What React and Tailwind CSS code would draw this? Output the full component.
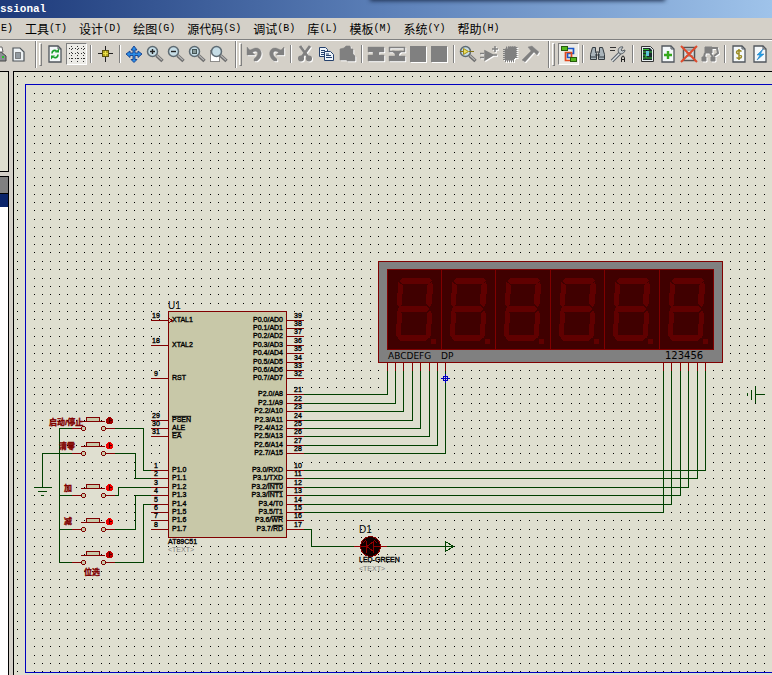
const MENUS = [
  ['', 'E'],
  ['工具', 'T'],
  ['设计', 'D'],
  ['绘图', 'G'],
  ['源代码', 'S'],
  ['调试', 'B'],
  ['库', 'L'],
  ['模板', 'M'],
  ['系统', 'Y'],
  ['帮助', 'H'],
];

function Page({ x = 4, children }) {
  return (
    <>
      <path d={`M${x} 2h9l3 3v13h-12z`} fill="#f4f8fa" stroke="#50565c" strokeWidth="1.3" />
      <path d={`M${x + 9} 2v3h3`} fill="none" stroke="#50565c" />
      {children}
    </>
  );
}

// greyed-out icons carry a white copy shifted down-right
function Etched({ children }) {
  return (
    <>
      <g transform="translate(1 1)" fill="#fff" stroke="#fff">{children}</g>
      <g fill="#808080" stroke="#808080">{children}</g>
    </>
  );
}

function Lens({ children }) {
  return (
    <>
      <path d="M11.5 11.5l6 5.5" stroke="#6d6d6d" strokeWidth="3.4" />
      <path d="M12 11.5l5 4.6" stroke="#b8b8b8" strokeWidth="1.2" />
      <circle cx="7.5" cy="7.5" r="5" fill="#c6dde6" stroke="#5d6a72" strokeWidth="1.5" />
      {children}
    </>
  );
}

const ICONS = {
  print: (
    <>
      <path d="M4 8h10l5 4v5H4z" fill="#8a8e92" stroke="#444" />
      <path d="M12 3h3l1 5h-5z" fill="#fff" stroke="#666" />
      <rect x="15" y="12" width="2" height="2" fill="#27c22b" />
    </>
  ),
  area: (
    <>
      <path d="M5 4h7l4 4v9H5z" fill="#eef3f5" stroke="#4c5358" strokeWidth="1.2" />
      <rect x="7.5" y="8.5" width="5" height="6" fill="#929aa0" stroke="#333" strokeDasharray="1 1" />
    </>
  ),
  refresh: (
    <Page>
      <path d="M7 9.5c0-3 3-4 4.5-2M13 10.5c0 3-3 4-4.500 2.500" fill="none" stroke="#18a02c" strokeWidth="1.7" />
      <path d="M10 8.500h4v-4zM10 11.500H6v4z" fill="#18a02c" />
    </Page>
  ),
  grid: (
    <path
      d="M2 4.5h17M2 9.5h17M2 14.5h17M4.5 2v16M10.5 2v16M16.5 2v16"
      stroke="#333"
      strokeDasharray="1 2"
    />
  ),
  origin: (
    <>
      <path d="M10.5 2v16M3 9.5h15" stroke="#222" />
      <rect x="7.5" y="6.5" width="6" height="6" fill="#b5a51e" stroke="#5a520e" />
      <path d="M10.5 7v5M8 9.5h5" stroke="#e8e04a" />
    </>
  ),
  move: (
    <path
      d="M10 2l3 4h-2v3h3V7l4 3-4 3.500v-2h-3v4h2l-3 3-3-3h2v-4H6v2L2 10l4-3v2h3V6H7z"
      fill="#2b8ce6"
      stroke="#123c8c"
      strokeWidth=".9"
    />
  ),
  zoomIn: <Lens><path d="M5 7.5h5M7.5 5v5" stroke="#222" strokeWidth="1.4" /></Lens>,
  zoomOut: <Lens><path d="M5 7.5h5" stroke="#222" strokeWidth="1.4" /></Lens>,
  zoomAll: <Lens><rect x="5.5" y="5.5" width="4" height="4" fill="#899" stroke="#455" /></Lens>,
  zoomArea: (
    <>
      <rect x="2.5" y="6.5" width="9" height="11" fill="#fff" stroke="#333" strokeDasharray="1 1" />
      <g transform="translate(1 0)"><Lens /></g>
    </>
  ),
  undo: <Etched><path d="M2 3v8h8L7.5 8.5c4-3 7 .5 4 4L9 15v2h3c7-5 5-14-2-13L5 6z" strokeWidth=".4" /></Etched>,
  redo: <Etched><path d="M18 3v8h-8l2.500-2.500c-4-3-7 .5-4 4L11 15v2H8C1 12 3 3 10 4l5 2z" strokeWidth=".4" /></Etched>,
  cut: (
    <Etched>
      <path d="M5 2l8 11M15 2L7 13" strokeWidth="2.8" />
      <circle cx="6" cy="14.5" r="2.3" strokeWidth="1.5" />
      <circle cx="14" cy="14.5" r="2.3" strokeWidth="1.5" />
    </Etched>
  ),
  copy: (
    <g fill="#eef4fa" stroke="#24406c">
      <path d="M3.5 3.5h6l2 2v7h-8z" />
      <path d="M5 6.5h4M5 8.5h3M5 10.5h3" />
      <path d="M8.5 7.5h6l3 3v6h-9z" />
      <path d="M10 11.5h5M10 13.5h6M10 10h3" />
    </g>
  ),
  paste: <Etched><path d="M3 5l4-1 2-2h4l1 3h2v5l2 2v5h-8v-1H3z" strokeWidth=".6" /></Etched>,
  blockCopy: <Etched><path d="M2 3h16v5h-5v3h5v6H2v-6h5V8H2z" strokeWidth=".4" /></Etched>,
  blockMove: (
    <Etched>
      <path d="M2.5 3v4.5h5M17.5 3v4.5h-5M2 3.5h16" fill="none" strokeWidth="1.5" />
      <path d="M5 7h10l-3 3v2h6v5H2v-5h6v-2z" strokeWidth=".4" />
    </Etched>
  ),
  block: <Etched><rect x="2.5" y="2.5" width="15" height="15" /></Etched>,
  pick: (
    <Lens>
      <path d="M5.5 4.500l5 3-5 3z" fill="#eee25c" stroke="#a08c1c" />
      <path d="M2 7.5h3.500M11 7.500h5" stroke="#807018" />
    </Lens>
  ),
  make: <Etched><path d="M6 7l8 4-8 5zM1 9.500h4M1 13.500h4M14 11h4M13 5h6M16 2v6" strokeWidth="1.5" /></Etched>,
  pack: (
    <Etched>
      <path d="M5 5h3V3h8v10l-3 3H5z" />
      <path d="M4.500 5v11M16 3v11" strokeWidth="3" strokeDasharray="1 1" />
      <path d="M6 4h10M5 16.500h10" strokeWidth="3" strokeDasharray="1 1" />
    </Etched>
  ),
  hammer: <Etched><path d="M7 3l4-1 7 6-2 3-3-3L4 18l-3-2 9-9z" strokeWidth=".4" /></Etched>,
  wires: (
    <>
      <path d="M9 4.500h5.500v5H8.500v4H13" fill="none" stroke="#1a56c8" strokeWidth="1.700" />
      <path d="M10 8.500H6.500v8H12M10 8.500h2.500v5" fill="none" stroke="#e0491e" strokeWidth="1.700" />
      <rect x="2.5" y="2.5" width="6" height="4" fill="#55b81e" stroke="#255c0c" />
      <rect x="11.5" y="13.5" width="6" height="4" fill="#55b81e" stroke="#255c0c" />
    </>
  ),
  find: (
    <g fill="#a9b4ba" stroke="#333b40">
      <path d="M5.5 3.500h3v4l1 2v6h-6v-5zM12.500 3.500h3l2 7v5h-6v-6l1-2z" />
      <path d="M8 8h5M8 11h5M4 13h5M12 13h5" />
    </g>
  ),
  property: (
    <>
      <path d="M2 3.500h6M2 6.500h5" stroke="#333" />
      <path d="M4 17l8-8" stroke="#596168" strokeWidth="3.600" />
      <path d="M4 17l8-8" stroke="#dde2e4" strokeWidth="1.500" />
      <path d="M15 3c-4-1-6 3-4 6 2 2 6 0 6-3l-3 1-1-1z" fill="#c4cacc" stroke="#555c62" />
      <path d="M13.500 18v-4l1-2h1l1 2v4M13.500 15.500h3" fill="none" stroke="#222" />
    </>
  ),
  newRoot: (
    <>
      <path d="M4.500 2.500h9l3 3v12h-12z" fill="#e8eef0" stroke="#333" />
      <path d="M6 4h7l2 2v10H6z" fill="#1c2a2e" />
      <path d="M6 5.500h6M6 8h3M12 8h3M6 11h3v3h6M6 14h2" fill="none" stroke="#35bf35" strokeWidth="1.200" />
      <rect x="9" y="7" width="3" height="5" fill="#5fc4dc" />
    </>
  ),
  newSheet: <Page><path d="M10 7v8M6 11h8" stroke="#36a81c" strokeWidth="2.400" /></Page>,
  removeSheet: (
    <>
      <path d="M4.500 3.500h11v13h-11z" fill="#d6dcdf" stroke="#555" strokeWidth="1.500" />
      <path d="M7 6h7M7 9h6M7 12h7" stroke="#777" />
      <path d="M2 2l16 16M18 2L2 18" stroke="#df4a2c" strokeWidth="2" />
    </>
  ),
  exit: (
    <Etched>
      <path d="M5 3h7v6H5zM2 13h4v4H2zM11 13h4v4h-4z" />
      <path d="M5 9l-1 4M10 9l3 4M12 4h5l1 5-4 3" fill="none" strokeWidth="2" />
    </Etched>
  ),
  bill: (
    <Page>
      <path d="M12.500 7.500c-2-2-5-1-5 .8 0 2.700 5 1.500 5 4.200 0 2-3.500 2.500-5 1M10 5v11" fill="none" stroke="#9a8a20" strokeWidth="1.500" />
    </Page>
  ),
  electric: <Page><path d="M13 5l-6 6h3l-3 5 7-6h-3.500z" fill="#23a4ea" stroke="#1670b8" strokeWidth=".5" /></Page>,
};

// '|' is a thin divider, '||' the edge of a toolbar with its grip
const TOOLBAR = [
  'print', 'area', '||', 'refresh', 'grid', '|', 'origin', '|',
  'move', 'zoomIn', 'zoomOut', 'zoomAll', 'zoomArea', '||',
  'undo', 'redo', '|', 'cut', 'copy', 'paste', '|',
  'blockCopy', 'blockMove', 'block', 'block', '|',
  'pick', 'make', 'pack', 'hammer', '||', 'wires', '|',
  'find', 'property', '|', 'newRoot', 'newSheet', 'removeSheet', 'exit', '|',
  'bill', 'electric',
];
const PRESSED = ['grid', 'wires'];

function ToolItem({ name }) {
  if (name === '|') {
    return (
      <div className="flex w-2 shrink-0 justify-center pt-1">
        <div className="h-[18px] w-[2px] border-l border-r border-l-[#808080] border-r-white" />
      </div>
    );
  }
  if (name === '||') {
    return (
      <div className="flex w-4 shrink-0 gap-[2px] pl-[6px]">
        <div className="h-[27px] w-[2px] border-l border-r border-l-[#808080] border-r-white" />
        <div className="mt-[2px] h-[23px] w-[3px] border border-t-white border-r-[#808080] border-b-[#808080] border-l-white" />
      </div>
    );
  }
  const pressed = PRESSED.includes(name);
  return (
    <button
      type="button"
      aria-label={name}
      aria-pressed={pressed}
      className={
        pressed
          ? 'mt-[2px] flex h-[22px] w-[21px] shrink-0 items-center justify-center border border-t-[#808080] border-r-white border-b-white border-l-[#808080] bg-[#ecebe6]'
          : 'mt-[2px] flex h-[21px] w-[21px] shrink-0 items-center justify-start'
      }
    >
      <svg width="20" height="20" viewBox="0 0 20 20" className="shrink-0">{ICONS[name]}</svg>
    </button>
  );
}

/* ---- schematic ---- */

const PITCH = 8.393;

function gridDots() {
  let d = '';
  for (let r = 0; r < 130; r++) {
    const y = Math.floor((r < 38 ? 76.6 : 76) + r * PITCH);
    for (let c = 0; c < 240; c++) {
      const x = Math.floor((c > 40 && c < 60 ? 17.8 : 17.3) + c * PITCH);
      d += `M${x} ${y}h1v1h-1z`;
    }
  }
  return d;
}
const DOTS = gridDots();

const LEFT_PINS = [
  [19, 320, 'XTAL1'], [18, 345, 'XTAL2'], [9, 378, 'RST'],
  [29, 420, 'PSEN', true], [30, 428, 'ALE'], [31, 436, 'EA', true],
  [1, 470, 'P1.0'], [2, 478, 'P1.1'], [3, 487, 'P1.2'], [4, 495, 'P1.3'],
  [5, 504, 'P1.4'], [6, 512, 'P1.5'], [7, 520, 'P1.6'], [8, 529, 'P1.7'],
];

const RIGHT_PINS = [
  [39, 320, 'P0.0/AD0'], [38, 328, 'P0.1/AD1'], [37, 336, 'P0.2/AD2'], [36, 345, 'P0.3/AD3'],
  [35, 353, 'P0.4/AD4'], [34, 362, 'P0.5/AD5'], [33, 370, 'P0.6/AD6'], [32, 378, 'P0.7/AD7'],
  [21, 394, 'P2.0/A8'], [22, 403, 'P2.1/A9'], [23, 411, 'P2.2/A10'], [24, 420, 'P2.3/A11'],
  [25, 428, 'P2.4/A12'], [26, 436, 'P2.5/A13'], [27, 445, 'P2.6/A14'], [28, 453, 'P2.7/A15'],
  [10, 470, 'P3.0/RXD'], [11, 478, 'P3.1/TXD'], [12, 487, 'P3.2/', 'INT0'], [13, 495, 'P3.3/', 'INT1'],
  [14, 504, 'P3.4/T0'], [15, 512, 'P3.5/T1'], [16, 520, 'P3.6/', 'WR'], [17, 529, 'P3.7/', 'RD'],
];

const SEGMENT_WIRES = [
  [387, 394], [395, 403], [403, 411], [412, 420], [420, 428], [429, 436], [437, 445], [445, 453],
];
const DIGIT_WIRES = [
  [705, 470], [697, 478], [688, 487], [680, 495], [671, 504], [663, 512],
];

const SWITCHES = [
  { y: 428, label: '启动/停止', lx: 49, ly: 425, dot: '#a00000' },
  { y: 453, label: '清零', lx: 59, ly: 449 },
  { y: 495, label: '加', lx: 64, ly: 491 },
  { y: 529, label: '减', lx: 64, ly: 524 },
  { y: 562, label: '位选', lx: 84, ly: 575, dot: '#c00000' },
];

function Chip() {
  return (
    <g fontSize="7">
      <rect x="168.5" y="311.5" width="118" height="226" fill="#c8c8a8" stroke="#800000" />
      <text x="168" y="309" fontSize="10">U1</text>
      <g stroke="#000" strokeWidth=".35">
        {LEFT_PINS.map(([n, y, name, bar]) => (
          <g key={n}>
            <path d={`M151 ${y}.5h17`} stroke="#800000" strokeWidth="1" />
            <text x="156" y={y - 2} textAnchor="middle">{n}</text>
            <text x="172" y={y + 2} textDecoration={bar ? 'overline' : undefined}>{name}</text>
          </g>
        ))}
        {RIGHT_PINS.map(([n, y, name, bar]) => (
          <g key={n}>
            <path d={`M287 ${y}.5h17`} stroke="#800000" strokeWidth="1" />
            <text x="298" y={y - 2} textAnchor="middle">{n}</text>
            <text x="283" y={y + 2} textAnchor="end">
              {name}
              {bar && <tspan textDecoration="overline">{bar}</tspan>}
            </text>
          </g>
        ))}
        <text x="168" y="544">AT89C51</text>
      </g>
      <path d="M169 318l3 2.500-3 2.500" fill="none" stroke="#800000" />
      <text x="168" y="552" fill="#808080">&lt;TEXT&gt;</text>
    </g>
  );
}

function Digit({ x }) {
  return (
    <g transform={`translate(${x} 0)`} fill="#600000">
      <path d="M15 278h27l3 3-4 3H16l-4-3z" />
      <path d="M11 282l5 3-1 19-3 3-2-3z" />
      <path d="M45 282l1 3-1 18-2 4-4-3 1-19z" />
      <path d="M14 306h25l4 3-4 3H14l-4-3z" />
      <path d="M11 310l4 3-1 21-3 4-2-3 1-22z" />
      <path d="M43 310l2 4-1 21-2 4-3-4 1-22z" />
      <path d="M13 335h26l3 3-4 3H13l-3-3z" />
      <circle cx="46.5" cy="341.5" r="2.800" />
    </g>
  );
}

function Display() {
  return (
    <g>
      <rect x="378.5" y="261.5" width="344" height="101" fill="#808080" stroke="#800000" />
      <rect x="387.5" y="269.5" width="326" height="80" fill="#400000" stroke="#800000" />
      {[387, 441, 495, 550, 604, 659].map((x) => (
        <g key={x}>
          <path d={`M${x}.5 269v81`} stroke="#800000" />
          <Digit x={x} />
        </g>
      ))}
      <g fontFamily="'DejaVu Sans', sans-serif" fontSize="9">
        <text x="388" y="359">ABCDEFG</text>
        <text x="441" y="359">DP</text>
        <text x="665" y="359" fontSize="10">123456</text>
      </g>
    </g>
  );
}

function Switch({ y, label, lx, ly, dot = '#f00000' }) {
  return (
    <g>
      <path d={`M72 ${y}.5h43`} stroke="#800000" />
      <rect x="86" y={y} width="15" height="1" fill="#dfdfd0" />
      <rect x="86.5" y={y - 10.5} width="13" height="4" fill="#c8c8a8" stroke="#800000" />
      <path d={`M81 ${y - 6.5}h24`} stroke="#800000" />
      <circle cx="83.5" cy={y + 0.5} r="2" fill="#c8c8a8" stroke="#800000" />
      <circle cx="103.5" cy={y + 0.5} r="2" fill="#c8c8a8" stroke="#800000" />
      <circle cx="109.5" cy={y - 7.5} r="3.500" fill={dot} />
      <path d={`M109.500 ${y - 10}v5M109 ${y - 7.5}h3`} stroke="#500000" />
      <text x={lx} y={ly} fill="#800000" stroke="#800000" strokeWidth=".35" fontSize="8" fontWeight="bold">{label}</text>
    </g>
  );
}

function Schematic() {
  return (
    <svg
      className="block h-full w-full"
      fontFamily="'Liberation Sans', 'Noto Sans CJK SC', sans-serif"
      shapeRendering="crispEdges"
    >
      <g transform="translate(-14 -72)">
        <path d={DOTS} fill="#000" />
        <rect x="25.5" y="84.5" width="1400" height="588" fill="none" stroke="#0000c0" />
        {/* keep the grid out of the pin columns */}
        <g fill="#dfdfd0">
          <rect x="288" y="312" width="18" height="70" />
          <rect x="380" y="364" width="66" height="9" />
          <rect x="660" y="364" width="46" height="9" />
        </g>

        <g fill="none" stroke="#004000">
          {SEGMENT_WIRES.map(([x, y]) => <path key={x} d={`M304 ${y}.5H${x}.5V371`} />)}
          {DIGIT_WIRES.map(([x, y]) => <path key={x} d={`M304 ${y}.5H${x}.5V371`} />)}
          <path d="M115 428.5h28.500v42h8" />
          <path d="M115 453.5h20.500v25h16" />
          <path d="M115 495.5h3.500v-8h33" />
          <path d="M115 529.5h20.500v-34h16" />
          <path d="M115 562.5h28.500v-58h8" />
          <path d="M72 428.5H59.500v134H72M59 495.5h13M59 529.5h13" />
          <path d="M72 453.5H42.500v34M34 487.5h18M38 491.5h9M41 495.5h3" />
          <path d="M304 529.5h7.500v17H354M387 546.5h66M445.500 541.5v10l8-5z" />
          <path d="M765 394.5h-9.500M755.500 386v17M751.500 390v10M747.500 393v3" />
        </g>
        <path
          d="M387.5 363v8m8-8v8m8-8v8m9-8v8m8-8v8m9-8v8m8-8v8m8-8v8M663.5 363v8m8-8v8m9-8v8m8-8v8m9-8v8m8-8v8"
          stroke="#800000"
        />
        <path d="M441 378.5h9M445.500 374v9M443.500 376.500h4v4h-4z" fill="none" stroke="#0000c0" />

        <Chip />
        <Display />
        {SWITCHES.map((s) => <Switch key={s.y} {...s} />)}

        <circle cx="370.5" cy="546.5" r="10" fill="#100000" stroke="#800000" />
        <path
          d="M354 546.5h12M374 546.5h13M366.500 541v12M373.500 541v12M373 542l-6 4.500 6 4.500M363 543l3-3M377 543l-3-3"
          fill="none"
          stroke="#900000"
        />
        <text x="359" y="533" fontSize="10">D1</text>
        <text x="359" y="562" fontSize="7" stroke="#000" strokeWidth=".35">LED-GREEN</text>
        <text x="359" y="571" fontSize="7" fill="#808080">&lt;TEXT&gt;</text>
      </g>
    </svg>
  );
}

export default function App() {
  return (
    <div className="flex h-screen flex-col overflow-hidden bg-[#d4d0c8] text-black">
      <header className="relative h-[18px] shrink-0 overflow-hidden bg-linear-to-r from-[#1e3a7a] via-[#5c80b8] to-[#9fc3ea]">
        <h1 className="font-['Liberation_Mono',monospace] text-[11px] leading-[18px] font-bold text-white">ssional</h1>
        <div className="absolute -top-1 right-[14%] left-[48%] h-1 shadow-[0_0_4px_1px_#1e3050]" />
      </header>

      <nav className="-ml-[5px] flex h-[21px] shrink-0 items-center gap-3 font-['Noto_Sans_CJK_SC',sans-serif] text-xs leading-4">
        {MENUS.map(([label, key]) => (
          <button key={key} type="button" className="flex shrink-0 items-center whitespace-nowrap">
            {label}
            <span className="font-['Liberation_Mono',monospace] text-[10px]">({key})</span>
          </button>
        ))}
      </nav>

      <div className="flex h-8 shrink-0 items-start overflow-hidden border-t border-[#808080] shadow-[inset_0_1px_0_#fff]">
        <div className="-ml-[13px] flex pt-[1px]">
          {TOOLBAR.map((name, i) => <ToolItem key={i} name={name} />)}
        </div>
      </div>

      <div className="flex min-h-0 flex-1 gap-1">
        <aside className="flex w-[9px] shrink-0 flex-col gap-1">
          <div className="h-[101px] shrink-0 border-y border-r border-black bg-[#dfdfd0]" />
          <div className="flex flex-1 flex-col border-t border-r border-black bg-white">
            <div className="h-[17px] border-b border-black bg-[#808080]" />
            <div className="h-[13px] bg-[#0a246a]" />
          </div>
        </aside>
        <main className="min-w-0 flex-1 border-t border-l border-black bg-[#dfdfd0]">
          <Schematic />
        </main>
      </div>
    </div>
  );
}
